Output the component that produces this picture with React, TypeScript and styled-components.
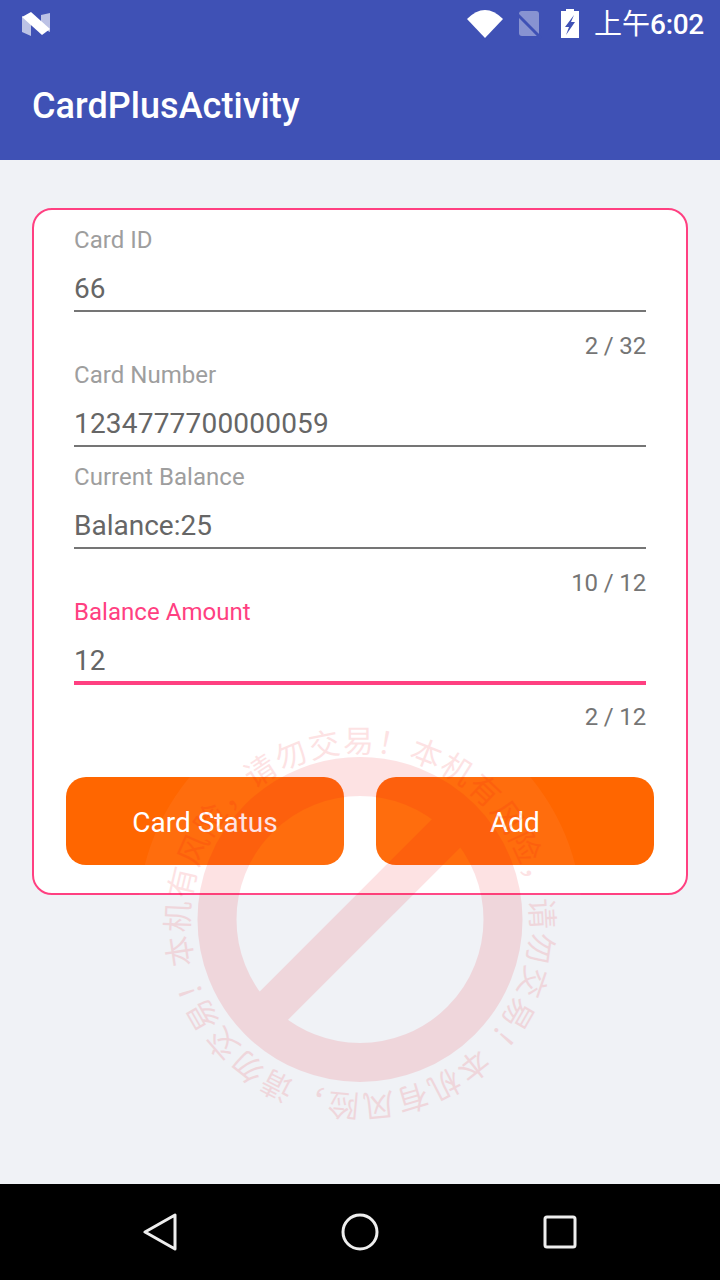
import { createGlobalStyle, styled } from "styled-components";

const Global = createGlobalStyle`
  html, body { margin: 0; padding: 0; }
  body { font-family: Roboto, "Noto Sans CJK SC", sans-serif; }
`;

const Screen = styled.div`
  position: relative;
  width: 720px;
  height: 1280px;
  overflow: hidden;
  display: flex;
  flex-direction: column;
  background: #f0f2f6;
`;

const StatusBar = styled.div`
  height: 48px;
  display: flex;
  align-items: center;
  padding: 0 16px 0 22px;
  background: #3f51b5;
  color: #fff;
`;

const StatusIcons = styled.div`
  margin-left: auto;
  display: flex;
  align-items: center;
  gap: 13px;
`;

const Clock = styled.span`
  margin-left: 2px;
  padding-top: 2px;
  font-size: 28px;
  line-height: 46px;
`;

const ClockDigits = styled.span`
  font-weight: 500;
  letter-spacing: -0.3px;
`;

const AppBar = styled.div`
  height: 112px;
  box-sizing: border-box;
  display: flex;
  align-items: center;
  padding: 4px 32px 0;
  background: #3f51b5;
  color: #fff;
  font-size: 36px;
  font-weight: 500;
  letter-spacing: 0.05px;
`;

const Content = styled.main`
  flex: 1;
  padding: 48px 32px 0;
`;

const Card = styled.section`
  height: 687px;
  box-sizing: border-box;
  padding: 0 40px;
  background: #fff;
  border: 2px solid #ff4081;
  border-radius: 20px;
`;

const Field = styled.div<{ $height: number }>`
  height: ${(p) => p.$height}px;
`;

const Label = styled.div<{ $active?: boolean }>`
  padding-top: 16px;
  font-size: 24px;
  line-height: 28px;
  letter-spacing: 0.04px;
  color: ${(p) => (p.$active ? "#ff4081" : "#9e9e9e")};
`;

const Value = styled.div<{ $digits?: boolean }>`
  height: 45px;
  margin-top: 11px;
  font-size: 28px;
  line-height: 48px;
  letter-spacing: ${(p) => (p.$digits ? 0.2 : 0)}px;
  color: #666;
`;

const Underline = styled.div<{ $active?: boolean }>`
  height: ${(p) => (p.$active ? 4 : 2)}px;
  margin-top: ${(p) => (p.$active ? -1 : 0)}px;
  background: ${(p) => (p.$active ? "#ff4081" : "#757575")};
`;

const Counter = styled.div<{ $active?: boolean }>`
  margin-top: ${(p) => (p.$active ? 16 : 18)}px;
  font-size: 24px;
  line-height: 32px;
  letter-spacing: -0.15px;
  text-align: right;
  color: #757575;
`;

const Buttons = styled.div`
  display: flex;
  justify-content: space-between;
  margin: 0 -8px;
`;

const ActionButton = styled.button`
  width: 278px;
  height: 88px;
  padding: 2px 0 0;
  border: 0;
  border-radius: 20px;
  background: #ff6600;
  color: #fff;
  font-family: inherit;
  font-size: 28px;
`;

const NavBar = styled.nav`
  height: 96px;
  display: flex;
  align-items: center;
  justify-content: space-around;
  padding: 0 60px;
  background: #000;
`;

const NavSlot = styled.div`
  width: 200px;
  display: flex;
  justify-content: center;
`;

const Watermark = styled.svg`
  position: absolute;
  left: 130px;
  top: 690px;
  pointer-events: none;
`;

const fields = [
  { label: "Card ID", value: "66", counter: "2 / 32", height: 135 },
  { label: "Card Number", value: "1234777700000059", height: 102, digits: true },
  { label: "Current Balance", value: "Balance:25", counter: "10 / 12", height: 135 },
  { label: "Balance Amount", value: "12", counter: "2 / 12", height: 195, active: true },
];

const WARNING = "本机有风险\uFF0C请勿交易\uFF01".repeat(3);

export default function App() {
  return (
    <Screen>
      <Global />
      <StatusBar>
        <svg width="28" height="24" viewBox="0 0 28 24">
          <path d="M0 4 L9 8 V24 L0 20 Z M19 3 L28 1 V20 L19 16 Z" fill="#fff" fillOpacity="0.65" />
          <path d="M0 5 L9 0 L28 17 L20 23 Z" fill="#fff" />
        </svg>
        <StatusIcons>
          <svg width="36" height="30" viewBox="0 0 36 30">
            <path d="M0 10 Q18 -8 36 10 L18 29 Z" fill="#fff" />
          </svg>
          <svg width="26" height="30" viewBox="0 0 26 30" style={{ marginRight: 6 }}>
            <path d="M6 2 H20 a3 3 0 0 1 3 3 V24 a3 3 0 0 1 -3 3 H6 a3 3 0 0 1 -3 -3 V5 a3 3 0 0 1 3 -3 Z" fill="#fff" fillOpacity="0.38" />
            <path d="M0 4 L25 29" stroke="#3f51b5" strokeWidth="3" fill="none" />
          </svg>
          <svg width="18" height="30" viewBox="0 0 18 30">
            <path d="M5 0 H13 V2 H18 V29 H0 V2 H5 Z M13 6 L4 18 H8 L5 26 L14 13 H10 Z" fill="#fff" fillRule="evenodd" />
          </svg>
          <Clock>
            上午<ClockDigits>6:02</ClockDigits>
          </Clock>
        </StatusIcons>
      </StatusBar>
      <AppBar>CardPlusActivity</AppBar>
      <Content>
        <Card>
          {fields.map((f) => (
            <Field key={f.label} $height={f.height}>
              <Label $active={f.active}>{f.label}</Label>
              <Value $digits={f.digits}>{f.value}</Value>
              <Underline $active={f.active} />
              {f.counter && <Counter $active={f.active}>{f.counter}</Counter>}
            </Field>
          ))}
          <Buttons>
            <ActionButton>Card Status</ActionButton>
            <ActionButton>Add</ActionButton>
          </Buttons>
        </Card>
      </Content>
      <NavBar>
        <NavSlot>
          <svg width="34" height="38" viewBox="0 0 34 38">
            <path d="M32 2 V36 L2 19 Z" fill="none" stroke="#eee" strokeWidth="3" strokeLinejoin="round" />
          </svg>
        </NavSlot>
        <NavSlot>
          <svg width="38" height="38" viewBox="0 0 38 38">
            <circle cx="19" cy="19" r="17" fill="none" stroke="#eee" strokeWidth="3" />
          </svg>
        </NavSlot>
        <NavSlot>
          <svg width="34" height="34" viewBox="0 0 34 34">
            <rect x="2" y="2" width="30" height="30" rx="2" fill="none" stroke="#eee" strokeWidth="3" />
          </svg>
        </NavSlot>
      </NavBar>
      <Watermark width="460" height="460" viewBox="0 0 460 460">
        <defs>
          <path id="wm-text" d="M 230 60.5 A 171 171 0 1 1 229.9 60.5 Z" />
        </defs>
        <circle cx="230" cy="229.5" r="222" fill="#fff" fillOpacity="0.05" />
        <g opacity="0.11" fill="none" stroke="#ee0010">
          <circle cx="230" cy="229.5" r="143" strokeWidth="39" />
          <path d="M 129 330.5 L 331 128.5" strokeWidth="40" />
          <text
            fontSize="31"
            fill="#ee0010"
            stroke="none"
            fontFamily="'Noto Sans CJK SC', sans-serif"
            letterSpacing="1.56"
            transform="translate(0 2) rotate(256 230 231.5)"
          >
            <textPath href="#wm-text">{WARNING}</textPath>
          </text>
        </g>
      </Watermark>
    </Screen>
  );
}
